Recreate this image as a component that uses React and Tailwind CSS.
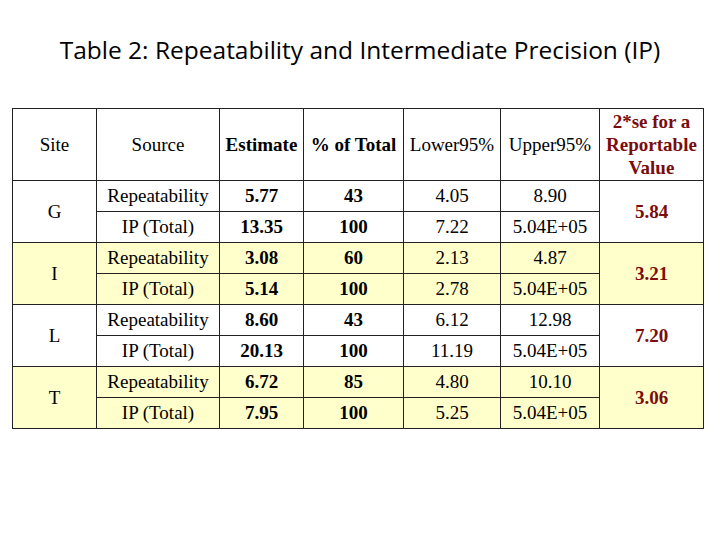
import React from "react"

const sites = [
    {
        site: "G", bg: "bg-white", se: "5.84",
        rows: [
            ["Repeatability", "5.77", "43", "4.05", "8.90"],
            ["IP (Total)", "13.35", "100", "7.22", "5.04E+05"],
        ],
    },
    {
        site: "I", bg: "bg-[#ffffcc]", se: "3.21",
        rows: [
            ["Repeatability", "3.08", "60", "2.13", "4.87"],
            ["IP (Total)", "5.14", "100", "2.78", "5.04E+05"],
        ],
    },
    {
        site: "L", bg: "bg-white", se: "7.20",
        rows: [
            ["Repeatability", "8.60", "43", "6.12", "12.98"],
            ["IP (Total)", "20.13", "100", "11.19", "5.04E+05"],
        ],
    },
    {
        site: "T", bg: "bg-[#ffffcc]", se: "3.06",
        rows: [
            ["Repeatability", "6.72", "85", "4.80", "10.10"],
            ["IP (Total)", "7.95", "100", "5.25", "5.04E+05"],
        ],
    },
]

const cell = "border border-[#222] text-center align-middle p-0"

export default function App() {
    return (
        <div className="w-[720px] h-[540px] bg-white flex flex-col items-center">
            <h1 className="mt-[30px] h-[40px] text-[24.5px] text-black font-['Open_Sans',sans-serif] leading-[40px]">
                Table 2: Repeatability and Intermediate Precision (IP)
            </h1>

            <div className="w-full pl-[12px] mt-[38px]">
                <table className="border-collapse table-fixed w-[691px] text-[19px] text-black font-['Liberation_Serif',serif] leading-[22px]">
                    <colgroup>
                        <col className="w-[84px]" />
                        <col className="w-[123px]" />
                        <col className="w-[84px]" />
                        <col className="w-[100px]" />
                        <col className="w-[97px]" />
                        <col className="w-[99px]" />
                        <col className="w-[104px]" />
                    </colgroup>
                    <thead>
                        <tr className="h-[72px]">
                            <th className={`${cell} font-normal`}>Site</th>
                            <th className={`${cell} font-normal`}>Source</th>
                            <th className={`${cell} font-bold whitespace-nowrap`}>Estimate</th>
                            <th className={`${cell} font-bold whitespace-nowrap`}>% of Total</th>
                            <th className={`${cell} font-normal`}>Lower95%</th>
                            <th className={`${cell} font-normal`}>Upper95%</th>
                            <th className={`${cell} font-bold text-[#7a0c0c] leading-[23px]`}>
                                2*se for a<br />Reportable<br />Value
                            </th>
                        </tr>
                    </thead>
                    <tbody>
                        {sites.map((s) =>
                            s.rows.map((r, i) => (
                                <tr key={s.site + i} className={`h-[31px] ${s.bg}`}>
                                    {i === 0 && (
                                        <td rowSpan={2} className={cell}>{s.site}</td>
                                    )}
                                    <td className={cell}>{r[0]}</td>
                                    <td className={`${cell} font-bold`}>{r[1]}</td>
                                    <td className={`${cell} font-bold`}>{r[2]}</td>
                                    <td className={cell}>{r[3]}</td>
                                    <td className={cell}>{r[4]}</td>
                                    {i === 0 && (
                                        <td rowSpan={2} className={`${cell} font-bold text-[#7a0c0c]`}>{s.se}</td>
                                    )}
                                </tr>
                            ))
                        )}
                    </tbody>
                </table>
            </div>
        </div>
    )
}
